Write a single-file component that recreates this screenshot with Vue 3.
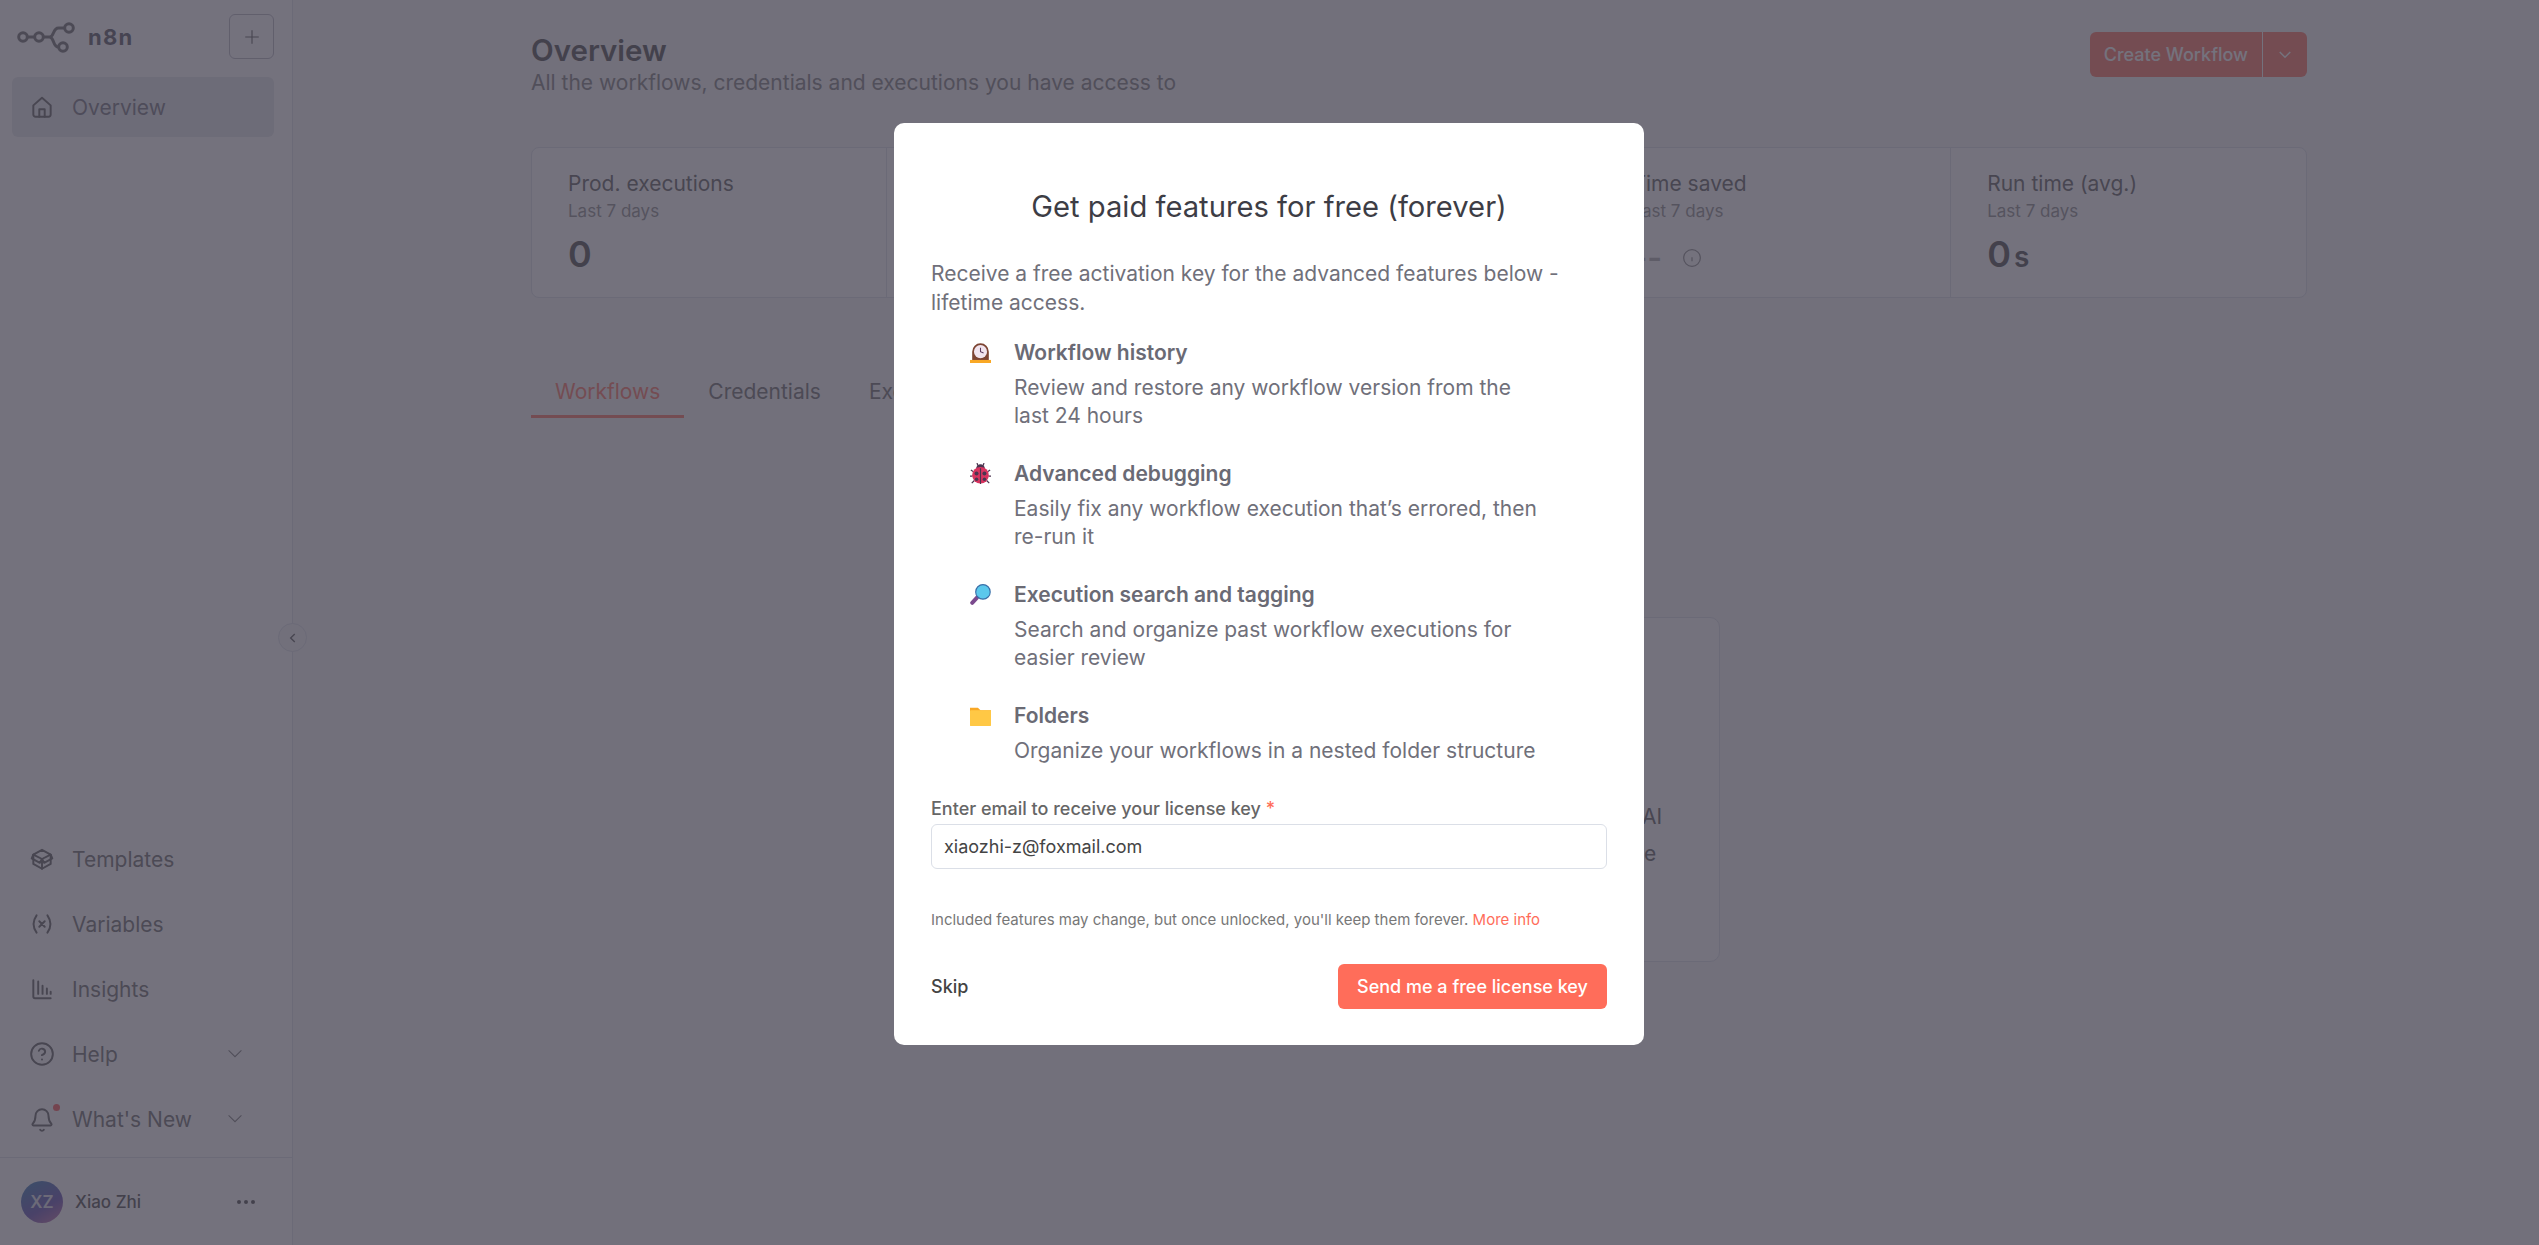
<template>
  <div class="app">
    <aside class="sidebar">
      <div class="logo-row">
        <div class="logo">
          <svg width="60" height="32" viewBox="0 0 60 32" fill="none" stroke="currentColor" stroke-width="3">
            <circle cx="6" cy="16" r="4.300" />
            <circle cx="22" cy="16" r="4.300" />
            <circle cx="52" cy="7" r="4.300" />
            <circle cx="46" cy="26" r="4.300" />
            <path d="M10.500 16h7M26.500 16h6c5 0 3-9 9-9h6.500M32.500 16c5 0 3 10 9 10" />
          </svg>
          <span class="logo-text">n8n</span>
        </div>
        <button class="plus">
          <svg viewBox="0 0 24 24"><path d="M12 3v18M3 12h18" /></svg>
        </button>
      </div>

      <div class="nav-item active">
        <svg class="nav-icon" viewBox="0 0 24 24" v-html="icons.home" />
        <span>Overview</span>
      </div>

      <div class="nav-bottom">
        <div v-for="item in navItems" :key="item.label" class="nav-item">
          <svg class="nav-icon" viewBox="0 0 24 24" v-html="item.icon" />
          <span v-if="item.dot" class="red-dot" />
          <span>{{ item.label }}</span>
          <svg v-if="item.more" class="nav-chevron" viewBox="0 0 24 24"><path d="m5 8 7 7 7-7" /></svg>
        </div>
      </div>

      <div class="user-row">
        <div class="avatar">XZ</div>
        <span class="user-name">Xiao Zhi</span>
        <span class="user-dots"><i /><i /><i /></span>
      </div>

      <button class="collapse">
        <svg viewBox="0 0 24 24"><path d="m15 5-7 7 7 7" /></svg>
      </button>
    </aside>

    <main class="main">
      <div class="page-head">
        <div>
          <h1>Overview</h1>
          <p>All the workflows, credentials and executions you have access to</p>
        </div>
        <div class="create-btn">
          <span class="create-label">Create Workflow</span>
          <span class="create-arrow">
            <svg viewBox="0 0 24 24"><path d="m5 8 7 7 7-7" /></svg>
          </span>
        </div>
      </div>

      <div class="stats">
        <div v-for="stat in stats" :key="stat.label" class="stat">
          <div class="stat-label">{{ stat.label }}</div>
          <div class="stat-sub">Last 7 days</div>
          <div v-if="stat.value" class="stat-value">{{ stat.value }}<small v-if="stat.unit">{{ stat.unit }}</small></div>
          <div v-else class="stat-empty">
            <span class="dash">--</span>
            <svg viewBox="0 0 24 24"><circle cx="12" cy="12" r="10" /><path d="M12 16v-5M12 8h0" /></svg>
          </div>
        </div>
      </div>

      <div class="tabs">
        <div v-for="(tab, i) in tabs" :key="tab" class="tab" :class="{ active: i === 0 }">{{ tab }}</div>
      </div>

      <div class="empty-card">
        <p>Test a ready made workflow today with simple AI</p>
        <p>Agent from the starter template to see the value</p>
      </div>
    </main>

    <div class="overlay">
      <div class="modal">
        <h2>Get paid features for free (forever)</h2>
        <p class="intro">Receive a free activation key for the advanced features below - lifetime access.</p>

        <ul class="features">
          <li v-for="f in features" :key="f.title">
            <span class="emoji" v-html="f.emoji" />
            <div>
              <strong>{{ f.title }}</strong>
              <p>{{ f.text }}</p>
            </div>
          </li>
        </ul>

        <label class="email-label">Enter email to receive your license key <em>*</em></label>
        <div class="email-input">xiaozhi-z@foxmail.com</div>

        <p class="note">Included features may change, but once unlocked, you'll keep them forever. <a>More info</a></p>

        <div class="actions">
          <span class="skip">Skip</span>
          <button class="send">Send me a free license key</button>
        </div>
      </div>
    </div>
  </div>
</template>

<script setup>
const icons = {
  home: '<path d="M4 10.500 12 3.500l8 7V19a2 2 0 0 1-2 2H6a2 2 0 0 1-2-2z"/><path d="M9.500 21v-7h5v7"/>'
}

const navItems = [
  {
    label: 'Templates',
    icon: '<path d="M12 12 4 8l8-4.500L20 8z"/><path d="M4 8v8.500l8 4.500 8-4.500V8"/><path d="M12 12v9"/><path d="M4 8 2.500 11.500 10 15.500l2-3.500 2 3.500 7.500-4L20 8"/>'
  },
  {
    label: 'Variables',
    icon: '<path d="M7 4c-3.500 5-3.500 11 0 16M17 4c3.500 5 3.500 11 0 16"/><path d="m9.500 9.500 5 5M14.500 9.500l-5 5"/>'
  },
  {
    label: 'Insights',
    icon: '<path d="M4 4v15a1.500 1.500 0 0 0 1.500 1.500H20"/><path d="M8.500 16.500V5M12.500 16.500V9M16.500 16.500v-5M20 16.500v-2"/>'
  },
  {
    label: 'Help',
    more: true,
    icon: '<circle cx="12" cy="12" r="10"/><path d="M9.100 9a3 3 0 0 1 5.800 1c0 2-3 3-3 3"/><path d="M12 17h.01"/>'
  },
  {
    label: "What's New",
    more: true,
    dot: true,
    icon: '<path d="M10.300 22a2 2 0 0 0 3.400 0"/><path d="M3.300 16.500c1.300-1.300 2.700-2.800 2.700-7.500a6 6 0 0 1 12 0c0 4.700 1.400 6.200 2.700 7.500.3.300.1 1.500-.7 1.500H4c-.8 0-1-1.200-.7-1.500z"/>'
  }
]

const stats = [
  { label: 'Prod. executions', value: '0' },
  { label: 'Failed executions', value: '0' },
  { label: 'Failure rate', value: '0', unit: '%' },
  { label: 'Time saved', value: '' },
  { label: 'Run time (avg.)', value: '0', unit: 's' }
]

const tabs = ['Workflows', 'Credentials', 'Executions']

const clock = `<svg viewBox="0 0 24 24">
  <path fill="#7d4533" d="M2.500 21V11a9.500 9.500 0 0 1 19 0v10z"/>
  <circle cx="12" cy="11" r="7.500" fill="#f1e4ee"/>
  <path d="M12 6.500V11l3.500 1.500" stroke="#5b3a5e" stroke-width="1.200" fill="none"/>
  <path d="M0 20.500h24V24H0z" fill="#f9a825"/>
</svg>`

const bug = `<svg viewBox="0 0 24 24">
  <path d="M4 10 1 8M3 15H0M5 20l-3 3M20 10l3-2M21 15h3M19 20l3 3M9 3 8 0M15 3l1-3" stroke="#4a3550" stroke-width="1.400"/>
  <circle cx="12" cy="6.500" r="5" fill="#4a3550"/>
  <circle cx="12" cy="14" r="9.500" fill="#d8335f"/>
  <path d="M12 6v18" stroke="#4a3550" stroke-width="1.300"/>
  <circle cx="7.500" cy="12" r="2.300" fill="#4a3550"/>
  <circle cx="16.500" cy="12" r="2.300" fill="#4a3550"/>
  <circle cx="7.500" cy="18.500" r="2" fill="#4a3550"/>
  <circle cx="16.500" cy="18.500" r="2" fill="#4a3550"/>
</svg>`

const lens = `<svg viewBox="0 0 24 24">
  <path d="M2.500 21.500 8 15.500" stroke="#7b4a8e" stroke-width="4.500" stroke-linecap="round"/>
  <circle cx="14.800" cy="9" r="8.300" fill="#5bc8ec" stroke="#3a6fa8" stroke-width="1.300"/>
</svg>`

const folder = `<svg viewBox="0 0 24 24">
  <path fill="#f9a825" d="M0 3h9l3 3h12v6H0z"/>
  <rect x="0" y="6" width="24" height="18" rx="1" fill="#ffc845"/>
</svg>`

const features = [
  { emoji: clock, title: 'Workflow history', text: 'Review and restore any workflow version from the last 24 hours' },
  { emoji: bug, title: 'Advanced debugging', text: 'Easily fix any workflow execution that’s errored, then re-run it' },
  { emoji: lens, title: 'Execution search and tagging', text: 'Search and organize past workflow executions for easier review' },
  { emoji: folder, title: 'Folders', text: 'Organize your workflows in a nested folder structure' }
]
</script>

<style>
html, body {
  margin: 0;
  background: #fbfbfb;
}
</style>

<style scoped>
.app {
  display: flex;
  height: 1245px;
  overflow: hidden;
  font-family: Inter, "Noto Sans", sans-serif;
  color: #555;
  background: #f5f5f5;
}

/* ── Sidebar ── */
.sidebar {
  position: relative;
  width: 293px;
  flex-shrink: 0;
  display: flex;
  flex-direction: column;
  box-sizing: border-box;
  background: #fff;
  border-right: 1px solid #dbdfe7;
  padding: 14px 0 0;
}

.logo-row {
  display: flex;
  justify-content: space-between;
  align-items: center;
  padding: 0 18px 0 17px;
  margin-bottom: 18px;
}

.logo {
  display: flex;
  align-items: center;
  gap: 11px;
  color: #666;
}

.logo-text {
  font-size: 22px;
  font-weight: 700;
  letter-spacing: 1.300px;
  color: #50505a;
}

.plus {
  width: 45px;
  height: 45px;
  box-sizing: border-box;
  display: flex;
  align-items: center;
  justify-content: center;
  background: transparent;
  border: 1px solid #b5b5bf;
  border-radius: 6px;
  padding: 0;
}

.plus svg {
  width: 18px;
  height: 18px;
  fill: none;
  stroke: #555;
  stroke-width: 1.500;
}

.nav-item {
  position: relative;
  display: flex;
  align-items: center;
  height: 60px;
  margin: 0 18px 0 12px;
  padding-left: 19px;
  gap: 19px;
  border-radius: 6px;
  font-size: 21px;
  color: #666;
}

.nav-item.active {
  background: #e5e7ea;
  color: #6d6d78;
}

.nav-icon {
  width: 26px;
  height: 26px;
  margin: 0 -2px;
  flex-shrink: 0;
  fill: none;
  stroke: #555;
  stroke-width: 1.800;
  stroke-linecap: round;
  stroke-linejoin: round;
}

.nav-bottom {
  margin-top: auto;
  display: flex;
  flex-direction: column;
  gap: 5px;
  padding-bottom: 8px;
  border-bottom: 1px solid #dbdfe7;
}

.nav-chevron {
  position: absolute;
  right: 28px;
  width: 22px;
  height: 22px;
  fill: none;
  stroke: #777;
  stroke-width: 1.200;
}

.red-dot {
  position: absolute;
  left: 41px;
  top: 15px;
  width: 7px;
  height: 7px;
  border-radius: 50%;
  background: #ff4d4d;
}

.user-row {
  display: flex;
  align-items: center;
  height: 87px;
  padding: 0 37px 0 21px;
}

.avatar {
  width: 42px;
  height: 42px;
  border-radius: 50%;
  background: linear-gradient(150deg, #2d6fb0 10%, #5a45ad 60%, #c56aa5 100%);
  color: #dfe0ea;
  display: flex;
  align-items: center;
  justify-content: center;
  font-size: 17px;
  font-weight: 600;
}

.user-name {
  margin-left: 12px;
  font-size: 17px;
  font-weight: 500;
  color: #444;
  flex: 1;
}

.user-dots {
  display: flex;
  gap: 3px;
}

.user-dots i {
  width: 4px;
  height: 4px;
  border-radius: 50%;
  background: #444;
}

.collapse {
  position: absolute;
  top: 623px;
  right: -15px;
  width: 29px;
  height: 29px;
  padding: 0;
  box-sizing: border-box;
  display: flex;
  align-items: center;
  justify-content: center;
  background: #f7f7f7;
  border: 1px solid #dbdfe7;
  border-radius: 50%;
  z-index: 1;
}

.collapse svg {
  width: 14px;
  height: 14px;
  fill: none;
  stroke: #555;
  stroke-width: 2.400;
}

/* ── Main ── */
.main {
  flex: 1;
  padding: 32px 232px 0 238px;
  min-width: 0;
}

.page-head {
  display: flex;
  justify-content: space-between;
  align-items: flex-start;
  margin-bottom: 49px;
}

.page-head h1 {
  margin: 0;
  font-size: 29.500px;
  font-weight: 600;
  line-height: 36px;
  color: #444;
}

.page-head p {
  margin: 0;
  font-size: 21px;
  line-height: 30px;
  color: #777;
}

.create-btn {
  display: flex;
  height: 45px;
  background: #ff6d5a;
  border-radius: 6px;
  color: #fff;
  font-size: 18px;
  font-weight: 500;
}

.create-label {
  display: flex;
  align-items: center;
  padding: 0 14px;
  border-right: 1px solid #fff;
}

.create-arrow {
  width: 44px;
  display: flex;
  align-items: center;
  justify-content: center;
}

.create-arrow svg {
  width: 18px;
  height: 18px;
  fill: none;
  stroke: #fff;
  stroke-width: 2;
}

.stats {
  display: grid;
  grid-template-columns: repeat(5, 1fr);
  height: 151px;
  box-sizing: border-box;
  border: 1px solid #dbdfe7;
  border-radius: 8px;
  background: #fff;
  margin-bottom: 70px;
}

.stat {
  padding: 21px 0 0 36px;
  border-right: 1px solid #dbdfe7;
}

.stat:last-child {
  border-right: 0;
}

.stat-label {
  font-size: 21px;
  line-height: 30px;
  color: #555;
}

.stat-sub {
  font-size: 17px;
  line-height: 24px;
  color: #888;
}

.stat-value {
  margin-top: 9px;
  font-size: 36px;
  line-height: 44px;
  font-weight: 600;
  color: #444;
}

.stat-value small {
  font-size: 28px;
  margin-left: 3px;
}

.stat-empty {
  display: flex;
  align-items: center;
  gap: 20px;
  height: 32px;
  margin-top: 19px;
  color: #aaa;
}

.stat-empty svg {
  width: 20px;
  height: 20px;
  fill: none;
  stroke: #888;
  stroke-width: 1.500;
}

.dash {
  font-size: 32px;
  font-weight: 600;
  line-height: 32px;
}

.tabs {
  display: flex;
  margin-bottom: 199px;
}

.tab {
  padding: 0 24px;
  height: 50px;
  line-height: 48px;
  font-size: 21px;
  color: #666;
  box-sizing: border-box;
}

.tab.active {
  color: #ff6d5a;
  border-bottom: 3px solid #ff6d5a;
}

.empty-card {
  width: 601px;
  height: 345px;
  margin: 0 auto;
  box-sizing: border-box;
  background: #fff;
  border: 1px solid #dbdfe7;
  border-radius: 10px;
  padding-top: 180px;
  text-align: center;
  font-size: 21px;
  line-height: 37px;
  color: #555;
}

.empty-card p {
  margin: 0 -40px;
  white-space: nowrap;
}

/* ── Modal ── */
.overlay {
  position: fixed;
  inset: 0;
  display: flex;
  justify-content: center;
  align-items: flex-start;
  padding-right: 1px;
  background: rgba(68, 65, 80, 0.74);
  z-index: 5;
}

.modal {
  width: 750px;
  height: 922px;
  margin-top: 123px;
  box-sizing: border-box;
  padding: 0 37px;
  background: #fff;
  border-radius: 10px;
  display: flex;
  flex-direction: column;
}

.modal h2 {
  margin: 0;
  padding-top: 64px;
  text-align: center;
  font-size: 29.200px;
  font-weight: 400;
  line-height: 40px;
  color: #3d3d45;
}

.intro {
  margin: 32px 0 0;
  font-size: 21px;
  line-height: 29px;
  color: #70707a;
}

.features {
  list-style: none;
  margin: 22px 0 0;
  padding: 0 70px 0 39px;
}

.features li {
  display: flex;
  gap: 23px;
  margin-bottom: 30px;
}

.emoji {
  width: 21px;
  height: 21px;
  margin-top: 3px;
  flex-shrink: 0;
  display: block;
}

.emoji :deep(svg) {
  display: block;
  width: 21px;
  height: 21px;
}

.features strong {
  display: block;
  margin-bottom: 7px;
  font-size: 21px;
  font-weight: 600;
  line-height: 28px;
  color: #6a6a74;
}

.features p {
  margin: 0;
  font-size: 21px;
  line-height: 28px;
  color: #70707a;
}

.email-label {
  margin-top: 2px;
  font-size: 18px;
  font-weight: 500;
  line-height: 24px;
  color: #666;
}

.email-label em {
  font-style: normal;
  color: #ff6d5a;
}

.email-input {
  margin-top: 3px;
  height: 45px;
  box-sizing: border-box;
  display: flex;
  align-items: center;
  padding: 0 12px;
  border: 1px solid #dbdfe7;
  border-radius: 6px;
  font-size: 18px;
  color: #444;
}

.note {
  margin: 40px 0 0;
  font-size: 15px;
  line-height: 22px;
  color: #777;
}

.note a {
  color: #ff6d5a;
}

.actions {
  margin-top: 33px;
  display: flex;
  justify-content: space-between;
  align-items: center;
}

.skip {
  font-size: 18px;
  font-weight: 500;
  color: #444;
}

.send {
  height: 45px;
  width: 269px;
  padding: 0;
  border: 0;
  border-radius: 6px;
  background: #ff6d5a;
  color: #fff;
  font-family: inherit;
  font-size: 18px;
  font-weight: 500;
}
</style>
